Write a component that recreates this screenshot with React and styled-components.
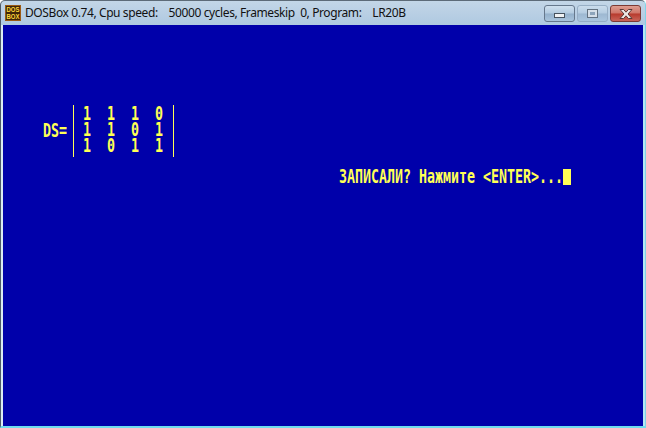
import React from "react";
import styled, { createGlobalStyle } from "styled-components";

const Global = createGlobalStyle`
  html, body {
    margin: 0;
    padding: 0;
    background: #fff;
  }
`;

const matrix = [
  ["1", "1", "1", "0"],
  ["1", "1", "0", "1"],
  ["1", "0", "1", "1"],
];

const DosIcon = () => (
  <svg width="16" height="16" viewBox="0 0 16 16">
    <rect width="16" height="16" fill="#9a5a14" />
    <rect x="1" y="1" width="14" height="14" fill="#3f2508" />
    <text x="8" y="7.200" textAnchor="middle" textLength="13" lengthAdjust="spacingAndGlyphs" fontFamily="Liberation Sans" fontWeight="700" fontSize="7" fill="#ffd83a">DOS</text>
    <text x="8" y="14.200" textAnchor="middle" textLength="13" lengthAdjust="spacingAndGlyphs" fontFamily="Liberation Sans" fontWeight="700" fontSize="7" fill="#ffd83a">BOX</text>
  </svg>
);

const App = () => {
  return (
    <Window>
      <Global />
      <TitleBar>
        <TitleIcon>
          <DosIcon />
        </TitleIcon>
        <Title>DOSBox 0.74, Cpu speed:&nbsp;&nbsp;&nbsp;&nbsp;50000 cycles, Frameskip&nbsp;&nbsp;0, Program:&nbsp;&nbsp;&nbsp;&nbsp;LR20B</Title>
        <Buttons>
          <WinButton>
            <MinGlyph />
          </WinButton>
          <WinButton $faded>
            <MaxGlyph />
          </WinButton>
          <CloseButton>
            <svg width="18" height="12" viewBox="0 0 18 12">
              <path d="M3 1.500h3.600L9 4.200l2.400-2.700H15l-4 4.500 4 4.500h-3.600L9 7.800 6.600 10.500H3l4-4.500z" fill="#eee9e6" stroke="#5b3a36" strokeWidth="1" />
            </svg>
          </CloseButton>
        </Buttons>
      </TitleBar>
      <Screen>
        <MatrixRow>
          <Label>DS=</Label>
          <Matrix>
            {matrix.map((row, i) => (
              <MatrixLine key={i}>
                {row.map((v, j) => (
                  <Cell key={j}>{v}</Cell>
                ))}
              </MatrixLine>
            ))}
          </Matrix>
        </MatrixRow>
        <Prompt>
          <PromptText>ЗАПИСАЛИ? Нажмите &lt;ENTER&gt;...</PromptText>
          <Cursor />
        </Prompt>
      </Screen>
    </Window>
  );
};

const Window = styled.div`
  width: 646px;
  height: 428px;
  box-sizing: border-box;
  display: flex;
  flex-direction: column;
  overflow: hidden;
  background: linear-gradient(180deg, #c3d6e7 0, #afc9e1 24px, #a5c3de 30px);
  border-top: 1px solid #5d6b78;
  border-left: 1px solid #4e5a66;
  border-right: 1px solid #7fd4e8;
  border-bottom: 2px solid #6fdcef;
  border-radius: 5px 5px 0 0;
`;

const TitleBar = styled.div`
  height: 24px;
  flex: none;
  display: flex;
  align-items: flex-start;
  padding-left: 4px;
`;

const TitleIcon = styled.div`
  width: 16px;
  height: 16px;
  margin-top: 4px;
`;

const Title = styled.div`
  margin-left: 4px;
  margin-top: 4px;
  font: 12px/16px "Noto Sans", "Liberation Sans", sans-serif;
  letter-spacing: -0.4px;
  color: #111;
  white-space: nowrap;
`;

const Buttons = styled.div`
  margin-left: auto;
  margin-right: 4px;
  margin-top: 4px;
  display: flex;
  gap: 2px;
`;

const WinButton = styled.div`
  width: 29px;
  height: 15px;
  display: flex;
  align-items: center;
  justify-content: center;
  border: 1px solid ${(p) => (p.$faded ? "#8ba3bb" : "#66788c")};
  border-radius: 3px;
  background: linear-gradient(180deg, #cfe0ee 0%, #b3cbe0 48%, #94b0cb 52%, #a9c4dc 100%);
  opacity: ${(p) => (p.$faded ? 0.75 : 1)};
`;

const CloseButton = styled(WinButton)`
  border-color: #7c3a34;
  background: linear-gradient(180deg, #dd9d90 0%, #cf7468 48%, #b7392c 52%, #c9655a 100%);
  opacity: 1;
`;

const MinGlyph = styled.div`
  width: 9px;
  height: 3px;
  margin-top: 3px;
  background: #f0f2f4;
  border: 1px solid #46525e;
`;

const MaxGlyph = styled.div`
  width: 5px;
  height: 3px;
  border: 2px solid #dfe4ea;
  outline: 1px solid #46525e;
  background: #7f96ad;
`;

const Screen = styled.div`
  flex: 1;
  margin: 0 2px 0 2px;
  background: #0000aa;
  color: #ffff55;
  font: 700 13.29px/16px "DejaVu Sans Mono", monospace;
  padding-top: 80px;
  box-shadow: -2px 0 0 #dcebf3, 2px 0 0 #b5e8f3;
`;

const MatrixRow = styled.div`
  display: flex;
  align-items: center;
  padding-left: 40px;
`;

const Label = styled.span`
  width: 30px;
  transform: scaleY(1.4);
  transform-origin: center;
`;

const Matrix = styled.div`
  display: flex;
  flex-direction: column;
  width: 101px;
  height: 52px;
  box-sizing: border-box;
  justify-content: center;
  padding-left: 8px;
  border-left: 1px solid #ffff55;
  border-right: 1px solid #ffff55;
`;

const MatrixLine = styled.div`
  display: flex;
  height: 16px;
  position: relative;
  top: -1px;
`;

const Cell = styled.span`
  flex: none;
  width: 24px;
  padding-left: 1px;
  box-sizing: border-box;
  transform: scaleY(1.4);
  transform-origin: left center;
`;

const Prompt = styled.div`
  display: flex;
  align-items: center;
  margin-top: 12px;
  padding-left: 336px;
  height: 16px;
`;

const PromptText = styled.span`
  white-space: pre;
  transform: scaleY(1.4);
  transform-origin: center;
`;

const Cursor = styled.span`
  width: 8px;
  height: 16px;
  background: #ffff55;
`;

export default App;
